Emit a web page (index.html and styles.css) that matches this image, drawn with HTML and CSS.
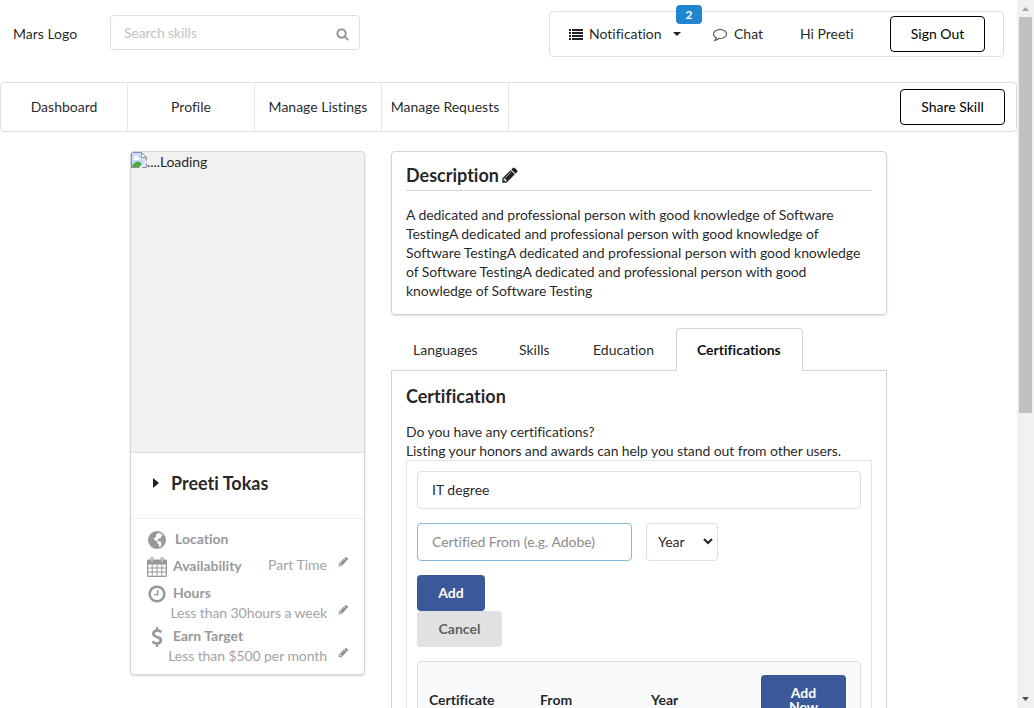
FILE: index.html
```html
<!DOCTYPE html>
<html lang="en">
<head>
<meta charset="utf-8">
<title>Profile</title>
<link rel="stylesheet" href="styles.css">
</head>
<body>
<svg class="defs" width="0" height="0">
  <symbol id="pencil" viewBox="0 0 1792 1792"><path d="M491 1536l91-91-235-235-91 91v107h128v128h107zm523-928q0-22-22-22-10 0-17 7l-542 542q-7 7-7 17 0 22 22 22 10 0 17-7l542-542q7-7 7-17zm-54-192l416 416-832 832h-416v-416zm683 96q0 53-37 90l-166 166-416-416 166-165q36-38 90-38 53 0 91 38l235 234q37 39 37 91z"/></symbol>
</svg>
<div class="app">
  <div class="page">
    <header class="top">
      <span class="logo">Mars Logo</span>
      <div class="search"><span>Search skills</span>
        <svg class="icon" width="14" height="14" viewBox="0 0 1792 1792"><path d="M1216 832q0-185-131.5-316.5t-316.5-131.5-316.5 131.5-131.5 316.5 131.5 316.5 316.5 131.5 316.5-131.5 131.5-316.5zm512 832q0 52-38 90t-90 38q-54 0-90-38l-343-342q-179 124-399 124-143 0-273.5-55.5t-225-150-150-225-55.5-273.5 55.5-273.5 150-225 225-150 273.5-55.5 273.5 55.5 225 150 150 225 55.5 273.5q0 220-124 399l343 343q37 37 37 90z"/></svg>
      </div>
      <div class="account">
        <div class="notify">
          <svg class="icon" width="14" height="12" viewBox="0 0 14 12"><path d="M0 0h2v2H0zM3 0h11v2H3zM0 3h2v2H0zM3 3h11v2H3zM0 6h2v2H0zM3 6h11v2H3zM0 9h2v2H0zM3 9h11v2H3z"/></svg>
          <span class="notify-text">Notification</span>
          <svg class="icon" width="8" height="4" viewBox="0 0 8 4"><path d="M0 0h8L4 4z"/></svg>
          <span class="badge">2</span>
        </div>
        <div class="chat">
          <svg class="icon" width="14" height="14" viewBox="0 0 1792 1792"><path d="M896 384q-204 0-381.5 69.5t-282 187.5-104.5 255q0 112 71.5 213.5t201.5 175.5l87 50-27 96q-24 91-70 172 152-63 275-171l43-38 57 6q69 8 130 8 204 0 381.5-69.5t282-187.5 104.5-255-104.5-255-282-187.5-381.5-69.5zm896 512q0 174-120 321.5t-326 233-450 85.5q-70 0-145-8-198 175-460 242-49 14-114 22h-5q-15 0-27-10.5t-16-27.5v-1q-3-4-.5-12t2-10 4.5-9.5l6-9 7-8.5 8-9q7-8 31-34.5t34.5-38 31-39.5 32.5-51 27-59 26-76q-157-89-247.5-220t-90.5-281q0-130 71-248.5t191-204.5 286-136.5 348-50.5 348 50.5 286 136.5 191 204.5 71 248.5z"/></svg>
          <span>Chat</span>
        </div>
        <span class="hi">Hi Preeti</span>
        <button class="outline signout">Sign Out</button>
      </div>
    </header>
    <nav class="nav">
      <a>Dashboard</a><a>Profile</a><a>Manage Listings</a><a>Manage Requests</a>
      <button class="outline share">Share Skill</button>
    </nav>
    <main class="main">
      <aside class="card">
        <div class="photo">
          <svg width="16" height="16" viewBox="0 0 16 16"><path d="M.5.5h10l5 5v10H.5z" fill="#c8dcfa" stroke="#8d9299"/><path d="M10.500 .5v5h5z" fill="#fff" stroke="#8d9299"/><path d="M3 6a2 2 0 0 1 4-.5A1.500 1.500 0 0 1 8 8H3.500A1 1 0 0 1 3 6z" fill="#fff"/><path d="M1 15v-1q5-7 9-3l1 1-3 3z" fill="#4fa83d"/><path d="M16 8l-8 8h2.500L16 10.500z" fill="#f0f0f0"/></svg><span>....Loading</span>
        </div>
        <div class="name">
          <svg class="icon" width="6" height="10" viewBox="0 0 6 10"><path d="M0 0l6 5-6 5z"/></svg>
          <span>Preeti Tokas</span>
        </div>
        <div class="facts">
          <div class="fact location">
            <svg class="glyph" width="18" height="18" viewBox="0 0 18 18"><circle cx="9" cy="9" r="9"/><path fill="#fff" d="M10 2l3 .8 1.800 1.700-1.600 1-.7 1.700-1.800.4-1.200 1.700.8 1.300 1.900-.3 1 1.200.2 2.200-1.500 2.500-.7-.4-.2-2.300-1.700-1.200-.1-2-1.600-.5-1-1.200-1.200-.3L7 6.400l1.300-.9-.6-1z"/></svg>
            <b>Location</b>
          </div>
          <div class="fact">
            <svg class="glyph" width="20" height="20" viewBox="0 0 20 20"><path fill-rule="evenodd" d="M1.500 2.500H3.500V1.500Q3.500 0 5 0T6.500 1.500v1h7v-1Q13.500 0 15 0t1.500 1.500v1h2q1.500 0 1.500 1.500v14.500q0 1.500-1.500 1.500h-17Q0 20 0 18.500V4q0-1.500 1.500-1.500zM1.300 7.500v3h3.400v-3zM5.700 7.500v3h3.800v-3zM10.500 7.500v3h3.800v-3zM15.300 7.500v3h3.400v-3zM1.300 11.500v3h3.400v-3zM5.700 11.500v3h3.800v-3zM10.500 11.500v3h3.800v-3zM15.300 11.500v3h3.400v-3zM1.300 15.500v3.300h3.400v-3.300zM5.700 15.500v3.300h3.800v-3.300zM10.500 15.500v3.300h3.800v-3.300zM15.300 15.500v3.300h3.400v-3.300zM4.500 1.300v3.200h1V1.300zM14.500 1.300v3.200h1V1.300z"/></svg>
            <b>Availability</b>
            <span class="value inline">Part Time</span>
            <svg class="edit" width="11" height="11"><use href="#pencil"/></svg>
          </div>
          <div class="fact hours">
            <svg class="glyph" width="20" height="20" viewBox="0 0 1792 1792"><path d="M1024 544v448q0 14-9 23t-23 9h-320q-14 0-23-9t-9-23v-64q0-14 9-23t23-9h224v-352q0-14 9-23t23-9h64q14 0 23 9t9 23zm416 352q0-148-73-273t-198-198-273-73-273 73-198 198-73 273 73 273 198 198 273 73 273-73 198-198 73-273zm224 0q0 209-103 385.500t-279.500 279.500-385.500 103-385.500-103-279.500-279.500-103-385.500 103-385.500 279.500-279.500 385.500-103 385.500 103 279.500 279.500 103 385.500z"/></svg>
            <b>Hours</b>
          </div>
          <div class="detail"><span class="value">Less than 30hours a week</span><svg class="edit" width="11" height="11"><use href="#pencil"/></svg></div>
          <div class="fact target">
            <svg class="glyph" width="20" height="20" viewBox="0 0 1792 1792"><path d="M1362 1185q0 153-99.500 263.500t-258.500 136.500v175q0 14-9 23t-23 9h-135q-13 0-22.500-9.500t-9.500-22.500v-175q-66-9-127.500-31t-101.500-44.500-74-48-46.500-37.500-17.500-18q-17-21-2-41l103-135q7-10 23-12 15-2 24 9l2 2q113 99 243 125 37 8 74 8 81 0 142.500-43t61.500-122q0-28-15-53t-33.500-42-58.500-37.500-66-32-80-32.500q-39-16-61.500-25t-61.500-26.500-62.500-31-56.500-35.500-53.500-42.500-43.500-49-35.500-58-21-66.500-8.500-78q0-138 98-242t255-134v-180q0-13 9.500-22.500t22.500-9.500h135q14 0 23 9t9 23v176q57 6 110.500 23t87 33.500 63.500 37.500 39 29 15 14q17 18 5 38l-81 146q-8 15-23 16-14 3-27-7-3-3-14.500-12t-39-26.500-58.500-32-74.500-26-85.500-11.500q-95 0-155 43t-60 111q0 26 8.500 48t29.500 41.500 39.500 33 56 31 60.500 27 70 27.500q53 20 81 31.500t76 35 75.500 42.500 62 50 53 63.500 31.500 76.500 13 94z"/></svg>
            <b>Earn Target</b>
          </div>
          <div class="detail"><span class="value">Less than $500 per month</span><svg class="edit" width="11" height="11"><use href="#pencil"/></svg></div>
        </div>
      </aside>
      <section class="content">
        <div class="description">
          <h3>Description <svg class="icon" width="18" height="18"><use href="#pencil"/></svg></h3>
          <p>A dedicated and professional person with good knowledge of Software<br>TestingA dedicated and professional person with good knowledge of<br>Software TestingA dedicated and professional person with good knowledge<br>of Software TestingA dedicated and professional person with good<br>knowledge of Software Testing</p>
        </div>
        <div class="tabs">
          <a>Languages</a><a>Skills</a><a>Education</a><a class="active">Certifications</a>
        </div>
        <div class="panel">
          <h3>Certification</h3>
          <p>Do you have any certifications?<br>Listing your honors and awards can help you stand out from other users.</p>
          <div class="form">
            <div class="field">IT degree</div>
            <div class="row">
              <div class="field from">Certified From (e.g. Adobe)</div>
              <div class="field year">Year
                <svg width="10" height="7" viewBox="0 0 10 7"><path d="M1 1l4 4 4-4" fill="none" stroke="#222" stroke-width="2"/></svg>
              </div>
            </div>
            <div class="actions">
              <button class="primary">Add</button>
              <button class="cancel">Cancel</button>
            </div>
            <div class="table">
              <b>Certificate</b><b>From</b><b>Year</b>
              <button class="primary new">Add<br>New</button>
            </div>
          </div>
        </div>
      </section>
    </main>
  </div>
  <div class="scrollbar">
    <svg width="17" height="17" viewBox="0 0 17 17"><path d="M5 11h7L8.500 7z" fill="#a3a3a3"/></svg>
    <div class="thumb"></div>
    <svg class="down" width="17" height="17" viewBox="0 0 17 17"><path d="M5 6h7l-3.500 4z" fill="#505050"/></svg>
  </div>
</div>
</body>
</html>
```
FILE: styles.css
```css
* { box-sizing: border-box; }
body { margin: 0; font: 14px/19px Lato, "Liberation Sans", sans-serif; font-variant-ligatures: none; color: rgba(0,0,0,.87); background: #fff; }
h3, p { margin: 0; }
button { font: inherit; font-variant-ligatures: none; margin: 0; padding: 0; border: 0; border-radius: 4px; display: block; }
svg { display: block; flex: none; }
.defs { display: none; }
.icon { fill: currentColor; }
.app { display: flex; width: 1034px; height: 708px; overflow: hidden; }
.page { width: 1017px; height: 708px; overflow: hidden; }

.top { display: flex; height: 82px; padding: 11px 13px 0; align-items: flex-start; }
.logo { width: 97px; padding-top: 13px; }
.search { display: flex; justify-content: space-between; align-items: center; width: 250px; height: 35px; margin-top: 4px; padding: 0 10px 0 13px; border: 1px solid #dededf; border-radius: 4px; color: #c3c3c3; letter-spacing: -.1px; }
.search .icon { color: #929292; margin-top: 3px; width: 13px; }
.account { display: flex; align-items: center; margin-left: auto; width: 455px; height: 46px; padding-left: 19px; border: 1px solid #dededf; border-radius: 4px; }
.notify { display: flex; align-items: center; position: relative; width: 144px; }
.notify .icon:first-child { margin-top: 1px; }
.notify-text { margin: 0 11px 0 6px; padding-bottom: 2px; }
.badge { position: absolute; left: 107px; top: -19px; width: 26px; height: 19px; border-radius: 4px; background: #2185d0; color: #fff; font-size: 12px; font-weight: 700; text-align: center; }
.chat { display: flex; align-items: center; gap: 7px; width: 87px; }
.chat .icon { color: #444; }
.chat span { padding-bottom: 2px; }
.hi { width: 90px; padding-bottom: 2px; }
.outline { height: 36px; border: 1px solid #000; background: #fff; color: #000; padding-bottom: 2px; }
.signout { width: 95px; }

.nav { display: flex; height: 50px; border: 1px solid #dededf; border-radius: 4px; align-items: center; padding-right: 11px; }
.nav a { width: 127px; height: 48px; border-right: 1px solid #e6e6e6; line-height: 48px; text-align: center; white-space: nowrap; }
.share { width: 105px; margin-left: auto; }

.main { display: flex; align-items: flex-start; gap: 26px; padding: 19px 0 0 130px; }
.card { width: 235px; height: 524px; border: 1px solid #d4d4d5; border-radius: 4px; box-shadow: 0 1px 2px #d4d4d5; overflow: hidden; }
.photo { display: flex; height: 301px; background: #f1f1f1; border-bottom: 1px solid #dedede; letter-spacing: -.08px; }
.name { display: flex; align-items: center; gap: 12px; height: 66px; padding: 0 0 5px 22px; border-bottom: 1px solid #eee; font-size: 18px; font-weight: 700; }
.name .icon { margin-top: -1px; }
.facts { padding: 10px 15px 0; color: #999; fill: #999; }
.fact { display: flex; height: 27px; align-items: flex-start; }
.glyph { width: 22px; margin-top: 1px; }
.fact b { margin-left: 5px; }
.location b { margin-left: 7px; }
.location .glyph { margin-top: 2px; }
.value { color: #a3a3a3; letter-spacing: -.08px; }
.value.inline { margin-left: auto; margin-top: -1px; letter-spacing: 0; }
.edit { margin: 1px 0 0 11px; fill: #8d8d8d; }
.fact .edit { margin-top: 0; }
.hours, .target { height: 20px; }
.detail { display: flex; justify-content: flex-end; height: 23px; }

.content { width: 496px; }
h3 { font-size: 18px; line-height: 22px; font-weight: 700; }
.description { height: 164px; padding: 12px 14px; border: 1px solid #d4d4d5; border-radius: 4px; box-shadow: 0 1px 2px rgba(34,36,38,.15); }
.description h3 { display: flex; align-items: center; gap: 2px; height: 27px; padding-bottom: 4px; border-bottom: 1px solid #d4d4d5; }
.description p { margin-top: 14px; white-space: nowrap; letter-spacing: -.075px; }
.tabs { display: flex; height: 43px; margin-top: 13px; position: relative; }
.tabs a { padding: 12px 0 0 22px; }
.tabs a:nth-child(1) { width: 106px; }
.tabs a:nth-child(2) { width: 74px; }
.tabs a:nth-child(3) { width: 105px; }
.tabs a.active { width: 127px; padding: 11px 0 0 20px; border: 1px solid #d4d4d5; border-bottom: 0; border-radius: 4px 4px 0 0; background: #fff; font-weight: 700; color: rgba(0,0,0,.95); }
.panel { height: 420px; margin-top: -1px; padding: 14px 14px 0; border: 1px solid #d4d4d5; }
.panel p { margin-top: 15px; letter-spacing: -.09px; white-space: nowrap; }
.form { height: 400px; padding: 10px; border: 1px solid #e3e4e4; }
.field { display: flex; align-items: center; height: 38px; padding: 0 14px 2px; border: 1px solid #dededf; border-radius: 4px; }
.row { display: flex; gap: 14px; margin: 14px 0; }
.from { width: 215px; border-color: #85b7d9; color: #8c8c8c; letter-spacing: -.03px; }
.year { width: 72px; padding: 0 4px 1px 11px; justify-content: space-between; }
.primary { height: 36px; width: 68px; background: #3b5998; color: #fff; font-weight: 700; padding-bottom: 1px; }
.cancel { height: 36px; width: 85px; background: #e0e1e2; color: rgba(0,0,0,.6); font-weight: 700; padding-bottom: 2px; }
.table { display: grid; grid-template-columns: 111px 111px 110px 85px; height: 78px; margin-top: 14px; padding-left: 11px; border: 1px solid #dededf; border-radius: 4px; background: #f9fafb; align-items: center; }
.table b { padding-bottom: 2px; }
.primary.new { width: 85px; height: 50px; line-height: 14px; padding-bottom: 0; }

.scrollbar { display: flex; flex-direction: column; width: 17px; height: 708px; background: #f1f1f1; }
.thumb { width: 13px; height: 396px; margin-left: 2px; background: #c1c1c1; }
.down { margin-top: auto; }
```
